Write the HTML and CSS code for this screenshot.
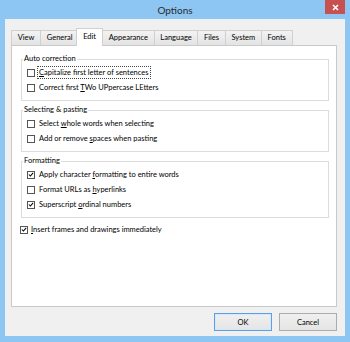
FILE: index.html
```html
<!DOCTYPE html>
<html lang="en">

<head>
  <meta charset="UTF-8" />
  <title>Options</title>
  <link rel="stylesheet" href="styles.css">
</head>

<body>
  <div class="window">
    <div class="titlebar">
      <span class="title">Options</span>
      <span class="close">
        <svg width="7" height="7" viewBox="0 0 7 7">
          <path d="M1 1 L6 6 M6 1 L1 6" stroke="#fff" stroke-width="1.6" />
        </svg>
      </span>
    </div>

    <div class="client">
      <div class="tabs">
        <div class="tab">View</div>
        <div class="tab">General</div>
        <div class="tab active">Edit</div>
        <div class="tab">Appearance</div>
        <div class="tab">Language</div>
        <div class="tab">Files</div>
        <div class="tab">System</div>
        <div class="tab">Fonts</div>
      </div>

      <div class="panel">
        <fieldset class="group">
          <legend>Auto correction</legend>
          <div class="check">
            <span class="box"></span>
            <span class="label focus"><u>C</u>apitalize first letter of sentences</span>
          </div>
          <div class="check">
            <span class="box"></span>
            <span class="label">Correct first <u>T</u>Wo UPpercase LEtters</span>
          </div>
        </fieldset>

        <fieldset class="group">
          <legend>Selecting &amp; pasting</legend>
          <div class="check">
            <span class="box"></span>
            <span class="label">Select <u>w</u>hole words when selecting</span>
          </div>
          <div class="check">
            <span class="box"></span>
            <span class="label">Add or remove <u>s</u>paces when pasting</span>
          </div>
        </fieldset>

        <fieldset class="group">
          <legend>Formatting</legend>
          <div class="check">
            <span class="box checked">
              <svg width="7" height="7" viewBox="0 0 7 7">
                <path d="M1 3.5 L2.8 5.3 L6 1.6" fill="none" stroke="#000" stroke-width="1.2" />
              </svg>
            </span>
            <span class="label">Apply character <u>f</u>ormatting to entire words</span>
          </div>
          <div class="check">
            <span class="box"></span>
            <span class="label">Format URLs as <u>h</u>yperlinks</span>
          </div>
          <div class="check">
            <span class="box checked">
              <svg width="7" height="7" viewBox="0 0 7 7">
                <path d="M1 3.5 L2.8 5.3 L6 1.6" fill="none" stroke="#000" stroke-width="1.2" />
              </svg>
            </span>
            <span class="label">Superscript <u>o</u>rdinal numbers</span>
          </div>
        </fieldset>

        <div class="check single">
          <span class="box checked">
            <svg width="7" height="7" viewBox="0 0 7 7">
              <path d="M1 3.5 L2.8 5.3 L6 1.6" fill="none" stroke="#000" stroke-width="1.2" />
            </svg>
          </span>
          <span class="label"><u>I</u>nsert frames and drawings immediately</span>
        </div>
      </div>

      <div class="buttons">
        <button class="btn default">OK</button>
        <button class="btn">Cancel</button>
      </div>
    </div>
  </div>
</body>

</html>
```

FILE: styles.css
```css
:root {
  --frame: #8dc6f3;
  --client: #f0f0f0;
  --border: #d0d0d0;
  --text: #000;
}

* {
  margin: 0;
  padding: 0;
  box-sizing: border-box;
  font-family: Lato, "Noto Sans", sans-serif;
}

body {
  width: 350px;
  height: 342px;
  overflow: hidden;
}

.window {
  width: 350px;
  height: 342px;
  background: var(--frame);
  display: flex;
  flex-direction: column;
  padding: 0 5px 6px 5px;
}

/* Title bar */
.titlebar {
  position: relative;
  height: 19px;
  flex-shrink: 0;
  display: flex;
  justify-content: center;
  align-items: center;
}

.title {
  font-size: 10px;
  color: #2b2b2b;
  margin-top: 1px;
}

.close {
  position: absolute;
  top: 0;
  right: 0;
  width: 20px;
  height: 14px;
  background: #c75050;
  display: flex;
  align-items: center;
  justify-content: center;
}

/* Client area */
.client {
  flex: 1;
  background: var(--client);
  padding: 9px 8px 0 6px;
  display: flex;
  flex-direction: column;
}

.tabs {
  display: flex;
  align-items: flex-end;
  height: 17px;
  position: relative;
  z-index: 1;
}

.tab {
  height: 15px;
  padding: 0 5.7px;
  font-size: 7.5px;
  color: var(--text);
  line-height: 14px;
  background: linear-gradient(#f3f3f3, #e3e3e3);
  border: 1px solid var(--border);
  border-bottom: none;
  margin-right: -1px;
}

.tab.active {
  height: 18px;
  background: #fff;
  line-height: 16px;
  margin: 0 -1px -1px -2px;
  padding: 0 6px;
  position: relative;
  z-index: 2;
}

.panel {
  height: 262px;
  background: #fff;
  border: 1px solid #c9c9c9;
  padding: 8px 7px 0 9px;
  display: flex;
  flex-direction: column;
  gap: 4px;
}

/* Group boxes */
.group {
  border: 1px solid #dcdcdc;
  padding: 1px 6px 5px 1px;
  margin: 0;
}

.group legend {
  font-size: 7.5px;
  line-height: 10px;
  color: var(--text);
  padding: 0 1px;
}

.check {
  display: flex;
  align-items: center;
  gap: 4px;
  height: 15px;
  padding-left: 4px;
  font-size: 7.5px;
  color: var(--text);
}

.check.single {
  padding-left: 0;
  margin-left: -1px;
  gap: 3px;
}

.box {
  width: 8px;
  height: 8px;
  border: 1px solid #555;
  background: #fff;
  display: flex;
  align-items: center;
  justify-content: center;
  flex-shrink: 0;
}

.box svg {
  display: block;
}

.label {
  white-space: nowrap;
  line-height: 11px;
  padding: 0 1px;
  margin-left: -1px;
}

.label.focus {
  outline: 1px dotted #444;
  outline-offset: 0;
}

/* Dialog buttons */
.buttons {
  display: flex;
  justify-content: flex-end;
  gap: 7px;
  margin-top: 6px;
}

.btn {
  width: 58px;
  height: 18px;
  font-size: 7.5px;
  color: var(--text);
  background: linear-gradient(#f0f0f0, #e5e5e5);
  border: 1px solid #acacac;
}

.btn.default {
  border-color: #5aa0e6;
  box-shadow: inset 0 0 0 1px #d6e8fa;
}
```
